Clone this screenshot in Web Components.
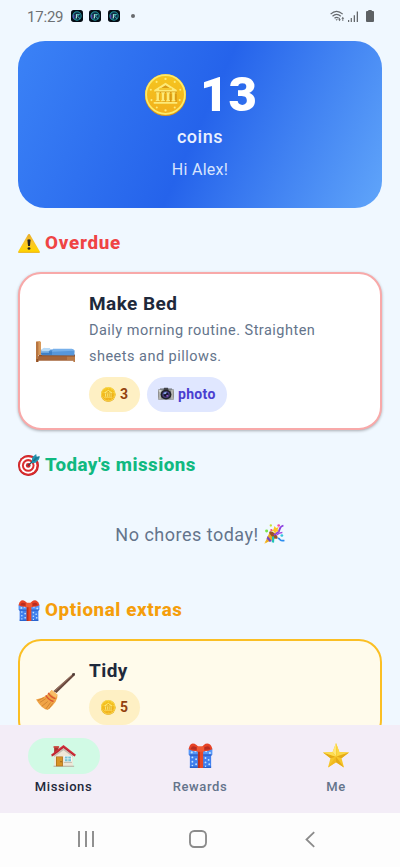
<!DOCTYPE html>
<html lang="en">
<head>
<meta charset="utf-8">
<meta name="viewport" content="width=device-width">
<title>Missions</title>
<style>
html,body{margin:0;height:100%;overflow:hidden;background:#f0f8ff}
body{font-family:Roboto,"Liberation Sans",sans-serif}
</style>
</head>
<body>
<chore-app></chore-app>
<script>
const ICONS = {
coin:`<defs><linearGradient id="g" x1="0" y1="0" x2="0" y2="1"><stop offset="0" stop-color="#f5c51f"/><stop offset="1" stop-color="#f2b01c"/></linearGradient></defs>
<ellipse cx="20" cy="21.4" rx="20" ry="19.6" fill="#d9901a"/><circle cx="20" cy="20" r="20" fill="#e9b51c"/><circle cx="20" cy="20" r="18.9" fill="url(#g)" stroke="#fdea6b" stroke-width="1.7"/>
<g fill="#d99a13"><path d="M10 17 20.5 10 31 17v1.5H10zM11 19h3v9h-3zM17 19h3v9h-3zM23 19h3v9h-3zM29 19h2v9h-2z"/></g>
<g fill="#fdea78"><path d="M9 15.5 20 8.6 31 15.5v1.7H9zm4.5-.3h13L20 11z" fill-rule="evenodd"/><path d="M14 13.6h12v1.8H14z" fill="#f5c92f"/><path d="M10.5 17.7h3.8v1h-.7v6.8h.7v1.2h-3.8v-1.2h.6v-6.8h-.6zM15.8 17.7h3.6v1h-.6v6.8h.6v1.2h-3.6v-1.2h.6v-6.8h-.6zM20.8 17.7h3.6v1h-.6v6.8h.6v1.2h-3.6v-1.2h.6v-6.8h-.6zM26 17.7h3.6v1H29v6.8h.6v1.2H26v-1.2h.6v-6.8H26zM8.5 27.3h23v1.8h-23z"/>
<circle cx="20" cy="4.8" r="1.1"/><circle cx="11.3" cy="7.7" r="1"/><circle cx="29" cy="7.7" r="1"/><circle cx="5.7" cy="15.4" r="1"/><circle cx="34.4" cy="15.4" r="1"/><circle cx="6.3" cy="25.5" r="1"/><circle cx="33.8" cy="25.5" r="1"/><circle cx="11.5" cy="32.8" r="1"/><circle cx="29" cy="32.8" r="1"/><circle cx="20" cy="35.6" r="1.1"/></g>`,
warn:`<defs><linearGradient id="g" x1="0" y1="0" x2="0" y2="1"><stop offset="0" stop-color="#e9b02a"/><stop offset=".45" stop-color="#fbc62a"/><stop offset="1" stop-color="#ffd400"/></linearGradient></defs><path d="M20 4 37.6 37.4H2.4z" fill="url(#g)" stroke="url(#g)" stroke-width="4" stroke-linejoin="round"/><path d="M1 38.6h38" stroke="#e5a51e" stroke-width="1.4" stroke-linecap="round"/><path d="M17 13.5q3-2.4 6 0L21.7 26h-3.4z" fill="#222"/><circle cx="20" cy="31" r="2.6" fill="#222"/>`,
bed:`<path d="M0 .7 3.6 0 5 1v13H1.4z" fill="#d89a5c"/><path d="M0 .7h2.4V21H0z" fill="#b87540"/><path d="M3 14h31l5-.6V18H2z" fill="#8f4f28"/><path d="M2 15.2h37v4.6H2z" fill="#a5653a"/><path d="M31 15.7h8V21h-1.6v-2H31z" fill="#b97a47"/><path d="M.4 18h1.8v3H.4z" fill="#925126"/><path d="M5 8.8 36 8l2.6 1.5-.2 5L6 14.3z" fill="#5797db"/><path d="M17 7.7h18.8q2.2.5 2.6 2L16 10.8z" fill="#77b0ea"/><path d="M5 10.3h11v3.5H5z" fill="#3f7fc5"/><path d="M5.4 9q1.5-2.4 4-2.1l4.7.2q.5 2.6-2 3.5H5.2z" fill="#b9dbf7"/><path d="M5 10.5h8v1.2H5z" fill="#83b9ea"/>`,
camera:`<path d="M5 4h8l1 2h12l1-2h8v4H5z" fill="#6d7075"/><rect y="6" width="40" height="29" rx="2" fill="#8b8e92"/><path d="M0 12h40v17H0z" fill="#5b5f64"/><path d="M1 8h7v26H1zM32 8h7v26h-7z" fill="#b3b2ae"/><rect x="14" y="2" width="12" height="8" rx="2" fill="#424449"/><rect x="3" y="9" width="6" height="4" fill="#e5e7df"/><circle cx="20" cy="21" r="13.5" fill="#202127"/><circle cx="20" cy="21" r="9.5" fill="#463c80"/><circle cx="20" cy="21" r="6" fill="#15152b"/><path d="M13 20a8 8 0 0 1 9-7l-2 6z" fill="#87a5df"/><circle cx="23" cy="24" r="2.6" fill="#9358bc"/>`,
target:`<circle cx="19" cy="21" r="19" fill="#b81f22"/><circle cx="19" cy="20.6" r="18.4" fill="#d92b2d"/><circle cx="18.6" cy="20.8" r="15" fill="#fff"/><circle cx="18.6" cy="20.8" r="11.5" fill="#d92e30"/><circle cx="18.6" cy="20.8" r="7.8" fill="#fff"/><circle cx="18.6" cy="20.8" r="4.3" fill="#ce282b"/><path d="M18.6 20.8 33 7" stroke="#234653" stroke-width="2.2"/><path d="m25 13 1-7 7-6 1 5 6-1-2 6-6 6-7 1z" fill="#2494b0"/><path d="M27 13 34 5M29 13l9-8" stroke="#14677e" stroke-width="1.6"/>`,
party:`<path d="M1 39 11 16l13 12z" fill="#eeac22"/><path d="m7 24 8 10-4 2-6-7z" fill="#7547be"/><path d="m3 34 3 3-5 2z" fill="#f6c542"/><ellipse cx="18" cy="22" rx="4" ry="10" transform="rotate(-47 18 22)" fill="#9a5125"/><path d="M19 22q4-3 7-5 3-2 4-7 1-5 7-7" fill="none" stroke="#8b3fe0" stroke-width="3.6"/><path d="M24 22q5-5 11-5" fill="none" stroke="#a247dd" stroke-width="2.6"/><path d="M26 29q3-1 5 3 2 2 8 1" fill="none" stroke="#2a8df0" stroke-width="3.2"/><path d="M17 25q1 6 0 12" fill="none" stroke="#20c4b5" stroke-width="4.4"/><path d="m20 4 3 4 5-2-2 5 2 4-4 0-3 5-2-5-5-1 4-3z" fill="#fcc426"/><circle cx="5" cy="14" r="2.9" fill="#77e449"/><circle cx="13" cy="3" r="2.3" fill="#c5e339"/><circle cx="28" cy="3" r="2.6" fill="#f548ab"/><circle cx="34" cy="23" r="2.7" fill="#35c5dd"/><circle cx="14" cy="12" r="2.2" fill="#f34783"/>`,
gift:`<path d="M3 18h34v21H3z" fill="#3f7fef"/><path d="M1 9h38v10H1z" fill="#5597fa"/><path d="M2 18.2h36v2H2z" fill="#285bc4"/><path d="M3 37.5h34V40H3z" fill="#2964cf"/><g fill="#c4e4ff"><circle cx="6" cy="15" r="1.7"/><circle cx="12" cy="13" r="1.7"/><circle cx="29" cy="13" r="1.7"/><circle cx="35" cy="16" r="1.7"/><circle cx="7" cy="23" r="1.5"/><circle cx="13" cy="26" r="1.5"/><circle cx="7" cy="30" r="1.5"/><circle cx="13" cy="34" r="1.5"/><circle cx="7" cy="36" r="1.3"/><circle cx="28" cy="24" r="1.5"/><circle cx="33" cy="27" r="1.5"/><circle cx="28" cy="31" r="1.5"/><circle cx="34" cy="34" r="1.5"/><circle cx="28" cy="37" r="1.2"/></g><path d="M15.8 12h8.4v28h-8.4z" fill="#ea4926"/><path d="M16 12h3v28h-3z" fill="#bb301d"/><path d="M20 10Q12-1 6 1 2 3 1 10q7 4 18 3zM20 10q6-11 13-9 5 2 6 9-7 4-18 3z" fill="#e64326"/><path d="M17 9Q10 3 6 6L4 10q7 1 13 1zM23 9q7-6 11-3l2 4q-7 1-13 1z" fill="#b92c20"/><rect x="14" y="5" width="12" height="9" rx="3" fill="#f15a33"/>`,
broom:`<path d="m39 0 1 2L21 21l-3-2z" fill="#67463c"/><path d="m37.5 1 1 .3L19 20l-1-1z" fill="#94705f"/><path d="m39.7.1.1 2.2-2.6.2-.2-1.9z" fill="#4b3a36"/><path d="m16 18 6 5q1 7-10 16-6-1-12-11Q11 26 16 18z" fill="#f0a446"/><path d="m16 18 6 5-2 3-6-5z" fill="#f9bd68"/><path d="M12.5 21q3 5 7.5 6M10 23.5q3 5 8 6.5" fill="none" stroke="#d95632" stroke-width="1.4"/><path d="m10 27-6 4M12 30l-6 5M15 31l-5 7M8 26l-6 3M17 32l-4 6" stroke="#c97a2b" stroke-width=".8"/>`,
house:`<path d="M5 3h7v13H5z" fill="#a9322d"/><path d="M4 2h9v3H4z" fill="#cc4941"/><path d="M5 17 20 5l15 13v19H5z" fill="#efe8d9"/><path d="M20 5 35 18v3L20 9 5 21v-3z" fill="#c5beb3"/><path d="M4 36h33v2H4z" fill="#b8b4a4"/><path d="M20 0 0 17l2.3 3L20 5.3 37.7 20l2.3-3z" fill="#d32c39"/><path d="M1 19 20 4l18 15" fill="none" stroke="#a12731" stroke-width="1.2"/><path d="M8 20h11v17H8z" fill="#a86a16"/><path d="M9 21h9v15H9z" fill="#d79327"/><circle cx="16" cy="29" r="1" fill="#754b15"/><path d="M21 19h12v11H21z" fill="#fff"/><path d="M22 20h10v8.5H22z" fill="#75c2d8"/><path d="M27 20v9M22 24h10" stroke="#e6f3ed" stroke-width="1.3"/><path d="M20.5 29.2h13v1.8h-13z" fill="#c0b8a6"/>`,
star:`<path d="m20 0 5.2 14.2L40 15 28.5 24.4 32.3 39 20 30.7 7.7 39l3.8-14.6L0 15l14.8-.8z" fill="#f6c629"/><path d="m20 0 1 21L40 15 25.2 14.2z" fill="#fbd846"/><path d="M20 0v21l-5.2-6.8z" fill="#ffe77a"/><path d="m0 15 20 7-8.5 2.4zM20 22l12.3 17L20 30.7zM21 21.4l19-6.4-11.5 9.4z" fill="#e5aa17"/><path d="m20 22-12.3 17L20 30.7z" fill="#f1b91f"/><path d="m0 15 14.8-.8L20 22z" fill="#fddd50"/>`,
chip:`<rect width="40" height="40" rx="9" fill="#050c14"/><circle cx="20" cy="20" r="14" fill="#102b45" stroke="#22929a" stroke-width="3.4"/><path d="M9 16v13" stroke="#5f4fc0" stroke-width="4"/><path d="M18 13h9v4h-9zM15 25h5v4h-5z" fill="#49b9a4"/><path d="m21 20 9 9M21 21l8-8" stroke="#48ccd0" stroke-width="3"/><path d="M18 14v13" stroke="#c3e3e1" stroke-width="3.4"/>`,
wifi:`<g fill="none" stroke="#666a6e" stroke-width="1.25"><path d="M.6 4.1Q6.5-1.5 12.7 4.1M2.5 6.2q4.1-3.8 8.3 0M4.5 8.3q2.1-1.9 4.2 0"/></g><path d="M5.5 9.2h2.3l-1.1 1.5z" fill="#666a6e"/><path d="M8.2 9.2h2.7L9.5 11.3zM11.4 8.8h2.8L12.8 6.7z" fill="#666a6e"/><path d="M9.5 7.8V10M12.8 8v3" stroke="#666a6e" stroke-width=".9"/>`,
signal:`<path d="M0 9h1.2v2H0zM2.7 7h1.2v4H2.7zM5.7 4.2H7V11H5.7zM8.7.5H10V11H8.7z" fill="#63676a"/>`,
battery:`<path d="M2.3 0h3.4v1H7q1 0 1 1v9q0 1-1 1H1q-1 0-1-1V2q0-1 1-1h1.3z" fill="#5d6164"/>`,
recents:`<path d="M1 1v16M8 1v16M15 1v16" stroke="#8b8b8b" stroke-width="1.9" fill="none"/>`,
home:`<rect x="1" y="1" width="16.4" height="16" rx="4.4" stroke="#8b8b8b" stroke-width="1.9" fill="none"/>`,
back:`<path d="M9.2 1.1 1.5 8.5l7.7 7.4" stroke="#8b8b8b" stroke-width="1.8" fill="none"/>`
};
const define = (name, html) => customElements.define(name, class extends HTMLElement {
  connectedCallback() {
    if (this.shadowRoot) return;
    const t = document.createElement('template');
    t.innerHTML = html;
    this.attachShadow({mode:'open'}).append(t.content.cloneNode(true));
  }
});

customElements.define('app-icon', class extends HTMLElement {
  connectedCallback() {
    if (this.shadowRoot) return;
    const w = this.getAttribute('w'), h = this.getAttribute('h') || w;
    const box = this.getAttribute('box') || '0 0 40 40';
    this.attachShadow({mode:'open'}).innerHTML =
      `<style>:host{display:block;flex:none;width:${w}px;height:${h}px}svg{display:block;overflow:visible}</style><svg width="${w}" height="${h}" viewBox="${box}" preserveAspectRatio="none" aria-hidden="true">${ICONS[this.getAttribute('name')]}</svg>`;
  }
});

define('status-bar', `<style>
:host{display:flex;height:41px;box-sizing:border-box;padding:0 26px 9px 27px;align-items:center;flex:none;color:#6d7174;font-size:15px;letter-spacing:-.2px}
.time{margin-right:7.5px;line-height:18px;padding-top:1px}.apps{display:flex;gap:6.4px}.dot{width:4.4px;height:4.4px;border-radius:50%;background:#686b6e;margin-left:11px}
.right{display:flex;margin-left:auto;align-items:center}
</style><span class="time">17:29</span><div class="apps"><app-icon name="chip" w="12"></app-icon><app-icon name="chip" w="12"></app-icon><app-icon name="chip" w="12"></app-icon></div><i class="dot"></i>
<div class="right"><app-icon name="wifi" w="14" h="12" box="0 0 14 12"></app-icon><app-icon style="margin-left:4.5px" name="signal" w="10" h="11" box="0 0 10 11"></app-icon><app-icon style="margin-left:8px" name="battery" w="8" h="12" box="0 0 8 12"></app-icon></div>`);

define('coin-hero', `<style>
:host{display:flex;flex-direction:column;align-items:center;flex:none;height:167px;box-sizing:border-box;border-radius:27px;color:#fff;background:linear-gradient(114.5deg,#3b82f6,#2563eb 50%,#60a5fa)}
.total{display:flex;align-items:center;gap:14px;margin-top:24.5px;height:58px;font-size:49px;font-weight:900;letter-spacing:0;padding-left:2px}
.unit{font-size:18px;font-weight:500;letter-spacing:.55px;line-height:26px;margin-top:.5px;color:#e9f0fe}
.hi{font-size:16px;letter-spacing:.3px;line-height:22px;margin-top:9px;color:#d8e4fd}
</style><div class="total"><app-icon name="coin" w="41" h="42" box="0 0 40 41"></app-icon><span><slot name="amount"></slot></span></div><div class="unit">coins</div><div class="hi"><slot></slot></div>`);

define('section-title', `<style>
:host{display:flex;align-items:center;gap:5px;height:28px;flex:none;font-size:18.8px;font-weight:800;letter-spacing:var(--track,.6px);line-height:28px}
</style><slot name="icon"></slot><span><slot></slot></span>`);

define('chore-card', `<style>
:host{display:flex;align-items:center;flex:none;box-sizing:border-box;border:2px solid var(--edge);border-radius:23px;background:var(--fill);padding:0 16px;gap:14px;box-shadow:var(--shadow,none)}
.icon{width:39px;flex:none;display:flex;justify-content:center}
.title{font-size:19px;font-weight:700;line-height:26px;letter-spacing:.45px;color:#1e293b}
.desc{font-size:14.5px;line-height:26.5px;letter-spacing:.48px;color:#64748b}
.desc ::slotted(*){display:block;padding-top:1px;margin-bottom:-1px}
.tags{display:flex;gap:7px}
</style><div class="icon"><slot name="icon"></slot></div><div><div class="title"><slot name="title"></slot></div><div class="desc"><slot name="desc"></slot></div><div class="tags"><slot></slot></div></div>`);

define('tag-pill', `<style>
:host{display:flex;align-items:center;height:35px;box-sizing:border-box;padding:0 11.7px;border-radius:18px;font-size:14px;font-weight:700;letter-spacing:.3px;gap:4.8px;background:#fef0c4;color:#92400e}
:host([kind=photo]){background:#e0e7ff;color:#4a3ed0;padding:0 11px;gap:4px}
</style><slot name="icon"></slot><span><slot></slot></span>`);

define('nav-item', `<style>
:host{display:flex;flex-direction:column;align-items:center;width:72px;color:#64748b;font-size:13px;font-weight:500;letter-spacing:.6px}
.pill{display:flex;align-items:center;justify-content:center;width:72px;height:36px;border-radius:18px;box-sizing:border-box;padding:0 0 1px 0}
:host([active]){color:#1e293b}:host([active]) .pill{background:#d1fae5;padding:0 1px 0 0}
span{line-height:18px;margin:4px 0 0 0}
:host([active]) span{margin-right:1px}
</style><div class="pill"><slot name="icon"></slot></div><span><slot></slot></span>`);

define('tab-bar', `<style>
:host{display:flex;justify-content:space-between;flex:none;height:88px;box-sizing:border-box;padding:13px 28px 0;background:#f3edf7}
</style><slot></slot>`);

define('system-bar', `<style>
:host{display:flex;align-items:center;flex:none;height:54px;box-sizing:border-box;padding:0 0 2px 78px;background:#fdfdfd}
</style><app-icon name="recents" w="16" h="18" box="0 0 16 18"></app-icon><app-icon style="margin-left:95px" name="home" w="18" h="18" box="0 0 18.4 18"></app-icon><app-icon style="margin-left:97.5px" name="back" w="10" h="17" box="0 0 10 17"></app-icon>`);

define('chore-app', `<style>
:host{display:flex;flex-direction:column;width:400px;height:867px;background:#f0f8ff;overflow:hidden}
main{flex:1;min-height:0;overflow:hidden;display:flex;flex-direction:column;padding:0 18px}
.late{height:158px;margin-top:15px;--edge:#f8a9a9;--fill:#fff;--shadow:0 1px 3px #0000004d}
.extra{height:104px;margin-top:15px;--edge:#fbbf24;--fill:#fffbeb}
.empty{display:flex;justify-content:center;align-items:center;gap:5px;height:28px;flex:none;margin:41px 0 48px;font-size:18px;letter-spacing:.5px;color:#64748b}
</style>
<status-bar></status-bar>
<main>
<coin-hero><span slot="amount">13</span>Hi Alex!</coin-hero>
<section-title style="color:#ef4444;margin-top:21px;--track:.75px"><app-icon slot="icon" name="warn" w="22" h="20"></app-icon>Overdue</section-title>
<chore-card class="late"><app-icon slot="icon" name="bed" w="39" h="21" box="0 0 39 21"></app-icon><span slot="title">Make Bed</span><span slot="desc">Daily morning routine. Straighten<br>sheets and pillows.</span>
<tag-pill style="margin-top:7px"><app-icon slot="icon" name="coin" w="14.5"></app-icon>3</tag-pill><tag-pill kind="photo" style="margin-top:7px"><app-icon slot="icon" name="camera" w="16" h="14.5"></app-icon>photo</tag-pill></chore-card>
<section-title style="color:#10b981;margin-top:21px;--track:.45px"><app-icon slot="icon" name="target" w="22"></app-icon>Today's missions</section-title>
<div class="empty"><span>No chores today!</span><app-icon name="party" w="21" h="20"></app-icon></div>
<section-title style="color:#f59e0b"><app-icon slot="icon" name="gift" w="22" h="21"></app-icon>Optional extras</section-title>
<chore-card class="extra"><app-icon slot="icon" name="broom" w="39" h="38" style="margin-top:2px"></app-icon><span slot="title">Tidy</span><tag-pill style="margin-top:6px"><app-icon slot="icon" name="coin" w="14.5"></app-icon>5</tag-pill></chore-card>
</main>
<tab-bar><nav-item active><app-icon slot="icon" name="house" w="25" h="23"></app-icon>Missions</nav-item><nav-item><app-icon slot="icon" name="gift" w="25" h="25"></app-icon>Rewards</nav-item><nav-item><app-icon slot="icon" name="star" w="26" h="25"></app-icon>Me</nav-item></tab-bar>
<system-bar></system-bar>`);
</script>
</body>
</html>
